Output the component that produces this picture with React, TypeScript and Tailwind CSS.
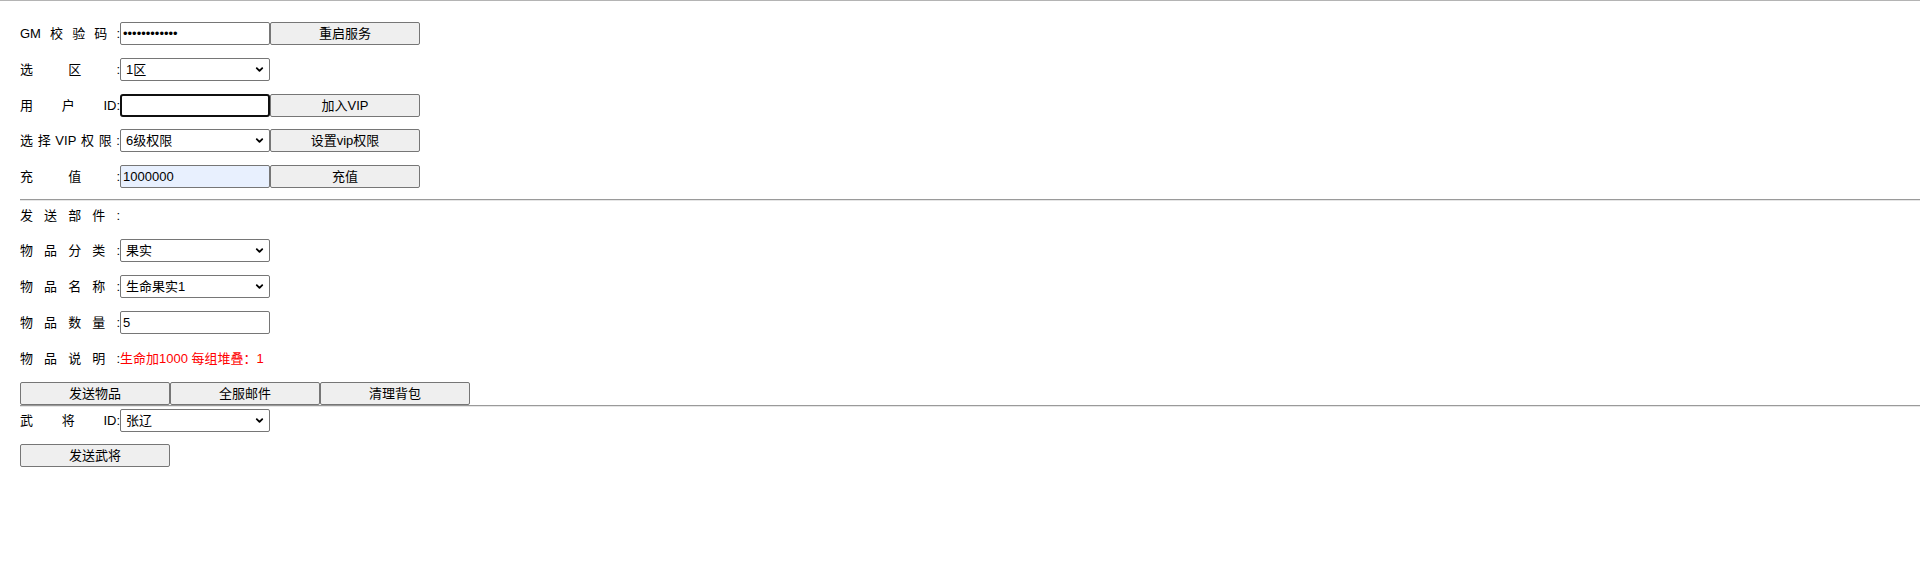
import React from 'react';
import { ChevronDown } from 'lucide-react';

const font = "font-['Liberation_Sans','Noto_Sans_CJK_SC',sans-serif]";

const controlBase =
  'h-[23px] w-[150px] border border-[#767676] rounded-[2px] text-[13px] text-black';

function Label({ parts }: { parts: string[] }) {
  return (
    <div className="w-[100px] flex justify-between text-[13px] text-black leading-none">
      {parts.map((p, i) => (
        <span key={i}>{p}</span>
      ))}
    </div>
  );
}

function Btn({ children }: { children: React.ReactNode }) {
  return (
    <button
      type="button"
      className="h-[23px] w-[150px] bg-[#efefef] border border-[#767676] rounded-[2px] text-[13px] text-black flex items-center justify-center"
    >
      {children}
    </button>
  );
}

function Select({ value }: { value: string }) {
  return (
    <div className="relative">
      <select
        defaultValue={value}
        className={`${controlBase} bg-white appearance-none pl-[5px] pr-5 block`}
      >
        <option>{value}</option>
      </select>
      <ChevronDown
        className="absolute right-[5px] top-[6px] w-[11px] h-[11px] pointer-events-none text-black"
        strokeWidth={4}
      />
    </div>
  );
}

function Input({ value, kind }: { value: string; kind?: 'focus' | 'fill' }) {
  if (kind === 'focus') {
    return (
      <input
        defaultValue={value}
        className="h-[23px] w-[150px] border-2 border-[#101010] rounded-[3px] text-[13px] bg-white px-[1px] outline-none"
      />
    );
  }
  return (
    <input
      defaultValue={value}
      className={`${controlBase} px-[2px] outline-none ${kind === 'fill' ? 'bg-[#e8f0fe]' : 'bg-white'}`}
    />
  );
}

function Row({ className, children }: { className: string; children: React.ReactNode }) {
  return <div className={`flex items-center h-[23px] ${className}`}>{children}</div>;
}

function Rule({ className }: { className: string }) {
  return <div className={`h-[2px] border-t border-t-[#9a9a9a] border-b border-b-[#e6e6e6] ${className}`} />;
}

export default function App() {
  return (
    <div className={`${font} w-[1920px] h-[571px] bg-white border-t border-t-[#b4b4b4] overflow-hidden`}>
      <div className="pl-5 flex flex-col">
        <Row className="mt-[21px]">
          <Label parts={['GM', '校', '验', '码', ':']} />
          <input
            type="password"
            defaultValue="abcdefghijkl"
            className={`${controlBase} bg-white px-[2px] outline-none`}
          />
          <Btn>重启服务</Btn>
        </Row>
        <Row className="mt-[13px]">
          <Label parts={['选', '区', ':']} />
          <Select value="1区" />
        </Row>
        <Row className="mt-[13px]">
          <Label parts={['用', '户', 'ID:']} />
          <Input value="" kind="focus" />
          <Btn>加入VIP</Btn>
        </Row>
        <Row className="mt-[12px]">
          <Label parts={['选', '择', 'VIP', '权', '限', ':']} />
          <Select value="6级权限" />
          <Btn>设置vip权限</Btn>
        </Row>
        <Row className="mt-[13px]">
          <Label parts={['充', '值', ':']} />
          <Input value="1000000" kind="fill" />
          <Btn>充值</Btn>
        </Row>

        <Rule className="mt-[11px]" />

        <Row className="mt-[3px]">
          <Label parts={['发', '送', '部', '件', ':']} />
        </Row>
        <Row className="mt-[12px]">
          <Label parts={['物', '品', '分', '类', ':']} />
          <Select value="果实" />
        </Row>
        <Row className="mt-[13px]">
          <Label parts={['物', '品', '名', '称', ':']} />
          <Select value="生命果实1" />
        </Row>
        <Row className="mt-[13px]">
          <Label parts={['物', '品', '数', '量', ':']} />
          <Input value="5" />
        </Row>
        <Row className="mt-[13px]">
          <Label parts={['物', '品', '说', '明', ':']} />
          <span className="text-[13px] text-[#ff0000] leading-none">生命加1000 每组堆叠：1</span>
        </Row>
        <Row className="mt-[12px]">
          <Btn>发送物品</Btn>
          <Btn>全服邮件</Btn>
          <Btn>清理背包</Btn>
        </Row>

        <Rule className="mt-0" />

        <Row className="mt-[2px]">
          <Label parts={['武', '将', 'ID:']} />
          <Select value="张辽" />
        </Row>
        <Row className="mt-[12px]">
          <Btn>发送武将</Btn>
        </Row>
      </div>
    </div>
  );
}
